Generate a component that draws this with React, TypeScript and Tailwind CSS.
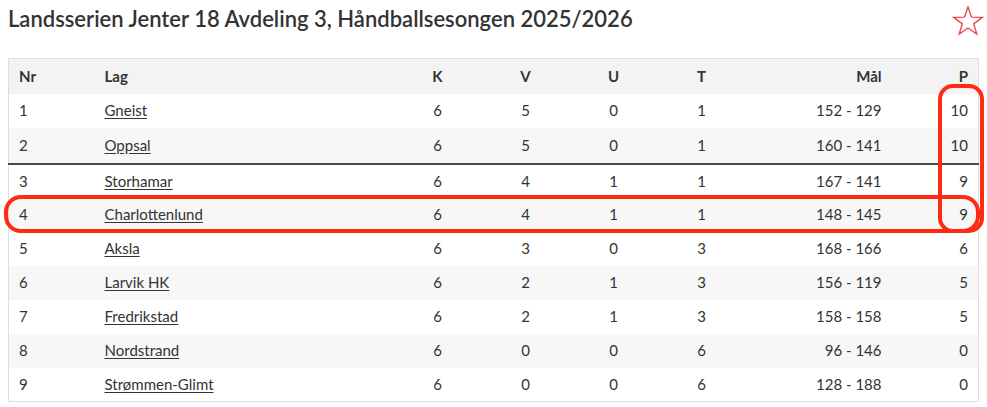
type Row = {
  nr: number;
  lag: string;
  k: number;
  v: number;
  u: number;
  t: number;
  mal: string;
  p: number;
};

const rows: Row[] = [
  { nr: 1, lag: "Gneist", k: 6, v: 5, u: 0, t: 1, mal: "152 - 129", p: 10 },
  { nr: 2, lag: "Oppsal", k: 6, v: 5, u: 0, t: 1, mal: "160 - 141", p: 10 },
  { nr: 3, lag: "Storhamar", k: 6, v: 4, u: 1, t: 1, mal: "167 - 141", p: 9 },
  { nr: 4, lag: "Charlottenlund", k: 6, v: 4, u: 1, t: 1, mal: "148 - 145", p: 9 },
  { nr: 5, lag: "Aksla", k: 6, v: 3, u: 0, t: 3, mal: "168 - 166", p: 6 },
  { nr: 6, lag: "Larvik HK", k: 6, v: 2, u: 1, t: 3, mal: "156 - 119", p: 5 },
  { nr: 7, lag: "Fredrikstad", k: 6, v: 2, u: 1, t: 3, mal: "158 - 158", p: 5 },
  { nr: 8, lag: "Nordstrand", k: 6, v: 0, u: 0, t: 6, mal: "96 - 146", p: 0 },
  { nr: 9, lag: "Strømmen-Glimt", k: 6, v: 0, u: 0, t: 6, mal: "128 - 188", p: 0 },
];

function FavStar() {
  return (
    <svg width="32" height="32" viewBox="0 0 32 32" className="mt-[5px] shrink-0">
      <polygon
        points="16,2 19.53,12.15 30.27,12.37 21.71,18.85 24.82,29.14 16,23 7.18,29.14 10.29,18.85 1.73,12.37 12.47,12.15"
        fill="none"
        stroke="#ef4452"
        strokeWidth="1.4"
        strokeLinejoin="miter"
      />
    </svg>
  );
}

export default function App() {
  return (
    <div
      className="relative w-[987px] h-[407px] bg-white text-[#333] overflow-hidden"
      style={{ fontFamily: "Lato, 'Noto Sans', sans-serif" }}
    >
      <div className="flex items-start justify-between pl-2 pr-[3px] h-[37px]">
        <h1 className="text-[22px] leading-[37px] font-semibold text-[#333]">
          Landsserien Jenter 18 Avdeling 3, Håndballsesongen 2025/2026
        </h1>
        <FavStar />
      </div>

      <div className="px-2 pt-[21px]">
        <table className="w-[970px] table-fixed border-collapse border border-[#dddddd] text-[15px]">
          <colgroup>
            <col className="w-[86px]" />
            <col className="w-[299px]" />
            <col className="w-[88px]" />
            <col className="w-[88px]" />
            <col className="w-[88px]" />
            <col className="w-[88px]" />
            <col className="w-[146px]" />
            <col className="w-[87px]" />
          </colgroup>
          <thead>
            <tr className="h-[35px] bg-[#f3f3f3] font-bold">
              <th className="text-left pl-[10px]">Nr</th>
              <th className="text-left pl-[10px]">Lag</th>
              <th className="text-center">K</th>
              <th className="text-center">V</th>
              <th className="text-center">U</th>
              <th className="text-center">T</th>
              <th className="text-right pr-[10px]">Mål</th>
              <th className="text-right pr-[10px]">P</th>
            </tr>
          </thead>
          <tbody>
            {rows.map((r) => (
              <tr
                key={r.nr}
                className={
                  (r.nr % 2 === 0 ? "bg-[#f7f7f7] " : "bg-white ") +
                  (r.nr === 2 ? "h-[36px] border-b-2 border-[#4a4a4a]" : "h-[34px]")
                }
              >
                <td className="pl-[10px]">{r.nr}</td>
                <td className="pl-[10px]">
                  <a className="underline underline-offset-2">{r.lag}</a>
                </td>
                <td className="text-center">{r.k}</td>
                <td className="text-center">{r.v}</td>
                <td className="text-center">{r.u}</td>
                <td className="text-center">{r.t}</td>
                <td className="text-right pr-[10px]">{r.mal}</td>
                <td className="text-right pr-[10px]">{r.p}</td>
              </tr>
            ))}
          </tbody>
        </table>
      </div>

      {/* red highlight annotations */}
      <div className="absolute left-[4px] top-[195px] w-[976px] h-[38px] border-4 border-[#ff2a12] rounded-[17px] pointer-events-none" />
      <div className="absolute left-[938px] top-[84px] w-[46px] h-[149px] border-4 border-[#ff2a12] rounded-[15px] pointer-events-none" />
    </div>
  );
}
